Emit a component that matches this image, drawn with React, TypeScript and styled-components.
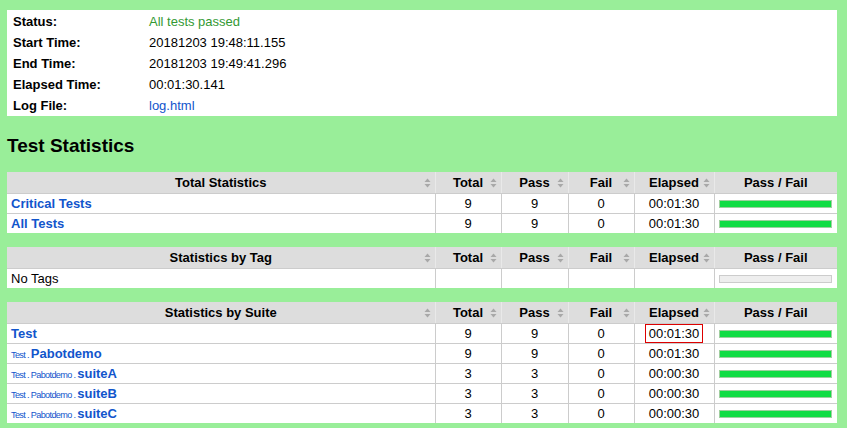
import React from "react";
import styled, { createGlobalStyle } from "styled-components";

const GlobalStyle = createGlobalStyle`
  html, body { margin: 0; padding: 0; }
  body {
    background: #99ee99;
    font-family: "Liberation Sans", Arial, sans-serif;
    font-size: 13px;
    color: #000;
  }
`;

const Page = styled.div`
  width: 830px;
  padding: 10px 0 0 7px;
  display: flex;
  flex-direction: column;
`;

const SummaryTable = styled.table`
  width: 100%;
  background: #fff;
  border-collapse: collapse;
  border-spacing: 0;
  margin: 0;
  td { height: 21px; padding: 0; vertical-align: middle; }
  tbody tr:first-child td { padding-top: 1px; }
`;

const Label = styled.td`
  width: 136px;
  padding-left: 6px !important;
  font-weight: bold;
`;

const Value = styled.td<{ $tone?: "pass" | "link" }>`
  color: ${(p) => (p.$tone === "pass" ? "#393" : p.$tone === "link" ? "#15c" : "#000")};
`;

const Heading = styled.h2`
  font-size: 19px;
  font-weight: bold;
  margin: 18px 0 15px 0;
  line-height: 23px;
`;

const StatTable = styled.table`
  width: 100%;
  table-layout: fixed;
  border-collapse: collapse;
  border-spacing: 0;
  background: #fff;
  margin-bottom: 14px;
`;

const HeadCell = styled.th`
  position: relative;
  background: #dddddd;
  height: 21px;
  padding: 0;
  font-weight: bold;
  text-align: center;
  border-bottom: 1px solid #cccccc;
  & + & { border-left: 1px solid #e9e9e9; }
`;

const SortIcon = styled.svg`
  position: absolute;
  right: 4px;
  top: 6px;
`;

const Row = styled.tr`
  & + & td { border-top: 1px solid #cccccc; }
`;

const Cell = styled.td<{ $align?: "left" | "center" }>`
  height: 19px;
  padding: 0;
  text-align: ${(p) => (p.$align === "left" ? "left" : "center")};
  vertical-align: middle;
  white-space: nowrap;
  overflow: hidden;
  & + & { border-left: 1px solid #cccccc; }
`;

const NameCell = styled(Cell)`
  padding-left: 4px;
`;

const GraphCell = styled(Cell)`
  padding: 0 5px 0 4px;
`;

const Graph = styled.div<{ $empty?: boolean }>`
  height: 6px;
  border: 1px solid ${(p) => (p.$empty ? "#cccccc" : "#9fcf9f")};
  background: ${(p) => (p.$empty ? "#eeeeee" : "#11dd44")};
`;

const StatLink = styled.a`
  color: #15c;
  font-weight: bold;
  text-decoration: none;
`;

const ParentName = styled.span`
  font-size: 0.7em;
  font-weight: normal;
  letter-spacing: -0.07em;
`;

const Highlight = styled.span`
  display: inline-block;
  border: 1px solid #dd0000;
  padding: 0 3px;
  line-height: 17px;
`;

const Sort = () => (
  <SortIcon width="7" height="10" viewBox="0 0 7 10">
    <path d="M3.5 0.5 L6.5 4 L0.5 4 Z" fill="#a8a8a8" />
    <path d="M0.5 6 L6.5 6 L3.5 9.5 Z" fill="#a8a8a8" />
  </SortIcon>
);

const Cols = () => (
  <colgroup>
    <col style={{ width: 428 }} />
    <col style={{ width: 66 }} />
    <col style={{ width: 67 }} />
    <col style={{ width: 66 }} />
    <col style={{ width: 80 }} />
    <col style={{ width: 123 }} />
  </colgroup>
);

const Header = ({ title }: { title: string }) => (
  <thead>
    <tr>
      <HeadCell>{title}<Sort /></HeadCell>
      <HeadCell>Total<Sort /></HeadCell>
      <HeadCell>Pass<Sort /></HeadCell>
      <HeadCell>Fail<Sort /></HeadCell>
      <HeadCell>Elapsed<Sort /></HeadCell>
      <HeadCell>Pass / Fail</HeadCell>
    </tr>
  </thead>
);

type Stat = {
  parent?: string;
  name: string;
  total: number;
  pass: number;
  fail: number;
  elapsed: string;
  highlight?: boolean;
};

const StatRow = ({ s }: { s: Stat }) => (
  <Row>
    <NameCell $align="left">
      <StatLink href="#">
        {s.parent && <ParentName>{s.parent}</ParentName>}
        {s.name}
      </StatLink>
    </NameCell>
    <Cell>{s.total}</Cell>
    <Cell>{s.pass}</Cell>
    <Cell>{s.fail}</Cell>
    <Cell>{s.highlight ? <Highlight>{s.elapsed}</Highlight> : s.elapsed}</Cell>
    <GraphCell>
      <Graph />
    </GraphCell>
  </Row>
);

const totals: Stat[] = [
  { name: "Critical Tests", total: 9, pass: 9, fail: 0, elapsed: "00:01:30" },
  { name: "All Tests", total: 9, pass: 9, fail: 0, elapsed: "00:01:30" },
];

const suites: Stat[] = [
  { name: "Test", total: 9, pass: 9, fail: 0, elapsed: "00:01:30", highlight: true },
  { parent: "Test . ", name: "Pabotdemo", total: 9, pass: 9, fail: 0, elapsed: "00:01:30" },
  { parent: "Test . Pabotdemo . ", name: "suiteA", total: 3, pass: 3, fail: 0, elapsed: "00:00:30" },
  { parent: "Test . Pabotdemo . ", name: "suiteB", total: 3, pass: 3, fail: 0, elapsed: "00:00:30" },
  { parent: "Test . Pabotdemo . ", name: "suiteC", total: 3, pass: 3, fail: 0, elapsed: "00:00:30" },
];

export default function App() {
  return (
    <>
      <GlobalStyle />
      <Page>
        <SummaryTable>
          <tbody>
            <tr><Label>Status:</Label><Value $tone="pass">All tests passed</Value></tr>
            <tr><Label>Start Time:</Label><Value>20181203 19:48:11.155</Value></tr>
            <tr><Label>End Time:</Label><Value>20181203 19:49:41.296</Value></tr>
            <tr><Label>Elapsed Time:</Label><Value>00:01:30.141</Value></tr>
            <tr><Label>Log File:</Label><Value $tone="link">log.html</Value></tr>
          </tbody>
        </SummaryTable>

        <Heading>Test Statistics</Heading>

        <StatTable>
          <Cols />
          <Header title="Total Statistics" />
          <tbody>
            {totals.map((s) => <StatRow key={s.name} s={s} />)}
          </tbody>
        </StatTable>

        <StatTable>
          <Cols />
          <Header title="Statistics by Tag" />
          <tbody>
            <Row>
              <NameCell $align="left">No Tags</NameCell>
              <Cell />
              <Cell />
              <Cell />
              <Cell />
              <GraphCell><Graph $empty /></GraphCell>
            </Row>
          </tbody>
        </StatTable>

        <StatTable>
          <Cols />
          <Header title="Statistics by Suite" />
          <tbody>
            {suites.map((s) => <StatRow key={(s.parent || "") + s.name} s={s} />)}
          </tbody>
        </StatTable>
      </Page>
    </>
  );
}
